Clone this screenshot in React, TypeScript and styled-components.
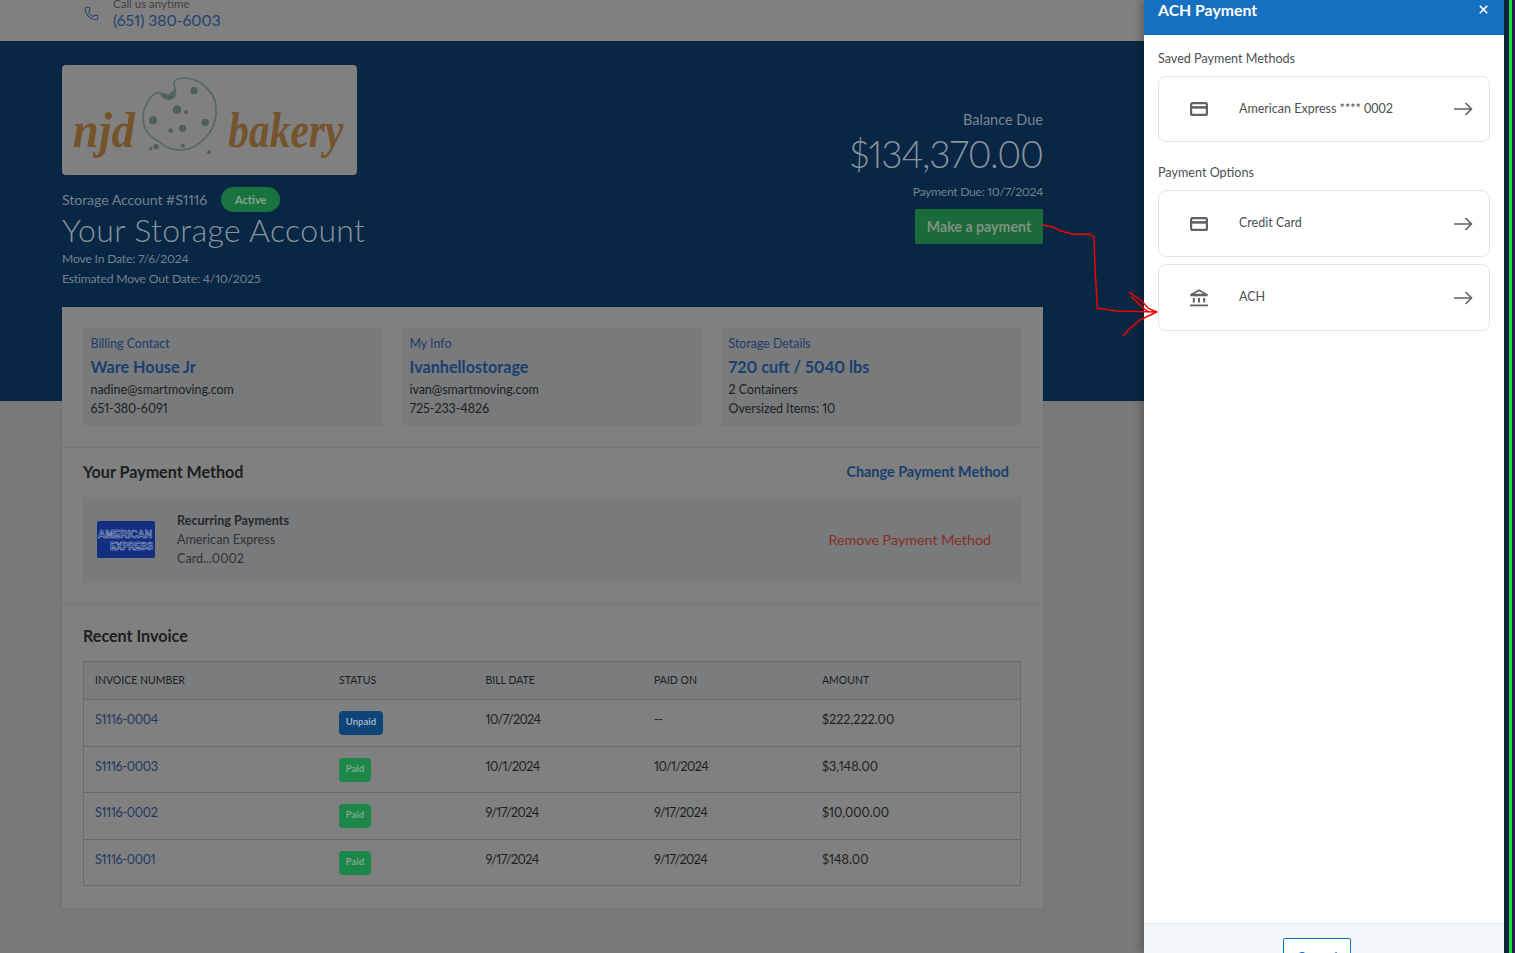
import React from 'react';
import styled, { createGlobalStyle } from 'styled-components';
import { Phone, X } from 'lucide-react';

const FONT = `Lato, "Open Sans", "Liberation Sans", sans-serif`;

const GlobalStyle = createGlobalStyle`
  html, body {
    margin: 0;
    padding: 0;
    height: 100%;
    overflow: hidden;
    background: #77797b;
    font-family: ${FONT};
    font-variant-numeric: proportional-nums;
    font-feature-settings: "pnum";
  }
  * { box-sizing: border-box; }
`;

const Page = styled.div`
  position: relative;
  width: 1515px;
  height: 953px;
  overflow: hidden;
  background: #77797b;
`;

const TopBar = styled.header`
  height: 41px;
  background: #808080;
  padding: 0 0 12px 84px;
  display: flex;
  align-items: flex-end;
  gap: 14px;
  color: #2b4672;
`;

const PhoneText = styled.div`
  display: flex;
  flex-direction: column;
`;

const PhoneLabel = styled.span`
  font-size: 11.5px;
  line-height: 14px;
  color: #3f4348;
`;

const PhoneNumber = styled.span`
  font-size: 15.6px;
  line-height: 18px;
  color: #26426f;
`;

const Hero = styled.section`
  height: 360px;
  background: #072744;
  padding: 24px 0 0 62px;
`;

const HeroInner = styled.div`
  width: 981px;
  display: flex;
  justify-content: space-between;
`;

const HeroLeft = styled.div`
  display: flex;
  flex-direction: column;
`;

const LogoBox = styled.div`
  width: 295px;
  height: 110px;
  background: #808080;
  border-radius: 4px;
`;

const AccountRow = styled.div`
  display: flex;
  align-items: center;
  gap: 14px;
  margin-top: 12px;
  height: 25px;
  font-size: 14.2px;
  letter-spacing: -0.1px;
  color: #74818e;
`;

const ActivePill = styled.span`
  width: 59px;
  height: 25px;
  border-radius: 13px;
  background: #19733f;
  color: #86a591;
  font-size: 11px;
  font-weight: 700;
  letter-spacing: 0;
  display: flex;
  align-items: center;
  justify-content: center;
`;

const Title = styled.h1`
  margin: -1px 0 0;
  font-size: 32px;
  line-height: 38px;
  font-weight: 300;
  color: #8a939c;
  letter-spacing: 0.35px;
`;

const Meta = styled.div`
  font-size: 12.2px;
  line-height: 19.5px;
  letter-spacing: -0.2px;
  color: #74818e;
`;

const HeroRight = styled.div`
  display: flex;
  flex-direction: column;
  align-items: flex-end;
  padding-top: 45px;
`;

const BalanceLabel = styled.div`
  font-size: 14.5px;
  line-height: 20px;
  color: #7b8590;
`;

const BalanceAmount = styled.div`
  font-size: 37px;
  line-height: 48px;
  font-weight: 300;
  letter-spacing: -1.1px;
  color: #8a939c;
`;

const PaymentDue = styled.div`
  margin-top: 5px;
  font-size: 12.2px;
  line-height: 18px;
  letter-spacing: -0.3px;
  color: #74818e;
`;

const PayButton = styled.button`
  margin-top: 8px;
  width: 128px;
  height: 35px;
  padding: 0 0 1px;
  border: 0;
  border-radius: 2px;
  background: #1b6b3a;
  color: #80917f;
  font-family: ${FONT};
  font-size: 14.2px;
  font-weight: 700;
`;

const Card = styled.main`
  position: relative;
  margin: -94px 0 0 62px;
  width: 981px;
  height: 601px;
  background: #808080;
  box-shadow: 0 0 4px rgba(0, 0, 0, 0.08);
`;

const InfoRow = styled.div`
  display: grid;
  grid-template-columns: 300px 300px 300px;
  column-gap: 19px;
  padding: 21px 21px;
  border-bottom: 1px solid #757678;
  height: 141px;
`;

const InfoBox = styled.div`
  height: 98px;
  background: #787a7c;
  padding: 6px 7.5px;
`;

const InfoLabel = styled.div`
  font-size: 12.4px;
  line-height: 19px;
  color: #1f3c68;
`;

const InfoName = styled.div`
  font-size: 16.2px;
  line-height: 27px;
  font-weight: 700;
  color: #1a3f6e;
`;

const InfoLine = styled.div`
  font-size: 12.5px;
  line-height: 19px;
  letter-spacing: -0.05px;
  color: #1c1f22;
`;

const Section = styled.section`
  padding: 11px 22px 21px 21px;
  border-bottom: 1px solid #757678;
`;

const SectionHead = styled.div`
  display: flex;
  justify-content: space-between;
  align-items: center;
  height: 25px;
  margin-bottom: 13px;
  padding-right: 12px;
`;

const SectionTitle = styled.h2`
  margin: 0;
  font-size: 16.1px;
  font-weight: 700;
  color: #1c1f22;
`;

const ChangeLink = styled.a`
  font-size: 14.4px;
  font-weight: 700;
  color: #1a3f6e;
`;

const MethodBox = styled.div`
  height: 86px;
  background: #787a7c;
  display: flex;
  align-items: center;
  padding: 0 30px 2px 14px;
`;

const MethodText = styled.div`
  margin-left: 22px;
  flex: 1;
  font-size: 12.6px;
  line-height: 19px;
  color: #2f3236;
`;

const MethodStrong = styled.div`
  font-weight: 700;
  color: #26292c;
`;

const RemoveLink = styled.a`
  font-size: 14.3px;
  color: #8a2f25;
`;

const InvoiceSection = styled.section`
  padding: 20px 22px 0 21px;
`;

const InvoiceTitle = styled(SectionTitle)`
  line-height: 22px;
  margin-bottom: 14px;
`;

const Table = styled.div`
  border: 1px solid #696b6d;
`;

const Row = styled.div<{ $h: number; $head?: boolean }>`
  display: grid;
  grid-template-columns: 244px 146.5px 168.5px 168px 1fr;
  padding: ${p => (p.$head ? '10px' : '11px')} 0 0 11px;
  height: ${p => p.$h}px;
  background: ${p => (p.$head ? '#7a7c7e' : 'transparent')};
  border-bottom: 1px solid #696b6d;
  font-size: ${p => (p.$head ? '10.5px' : '12.6px')};
  line-height: ${p => (p.$head ? '16px' : '17px')};
  color: #1c1f22;
  &:last-child { border-bottom: 0; }
`;

const InvoiceLink = styled.a`
  letter-spacing: -0.3px;
  color: #1f3860;
`;

const DateText = styled.span`
  letter-spacing: -0.6px;
`;

const StatusBadge = styled.span<{ $unpaid?: boolean }>`
  display: flex;
  align-items: center;
  justify-content: center;
  width: ${p => (p.$unpaid ? 44 : 32)}px;
  height: 24px;
  padding-bottom: 3px;
  border-radius: 4px;
  background: ${p => (p.$unpaid ? '#0f4478' : '#1d8749')};
  color: ${p => (p.$unpaid ? '#9fb0c2' : '#7fa890')};
  font-size: 9.5px;
  font-weight: 700;
`;

const Drawer = styled.aside`
  position: absolute;
  top: 0;
  left: 1144px;
  width: 360px;
  height: 953px;
  background: #fff;
  display: flex;
  flex-direction: column;
  box-shadow: -3px 0 8px rgba(0, 0, 0, 0.25);
`;

const DrawerHead = styled.div`
  height: 35px;
  flex: none;
  background: #1570c1;
  color: #fff;
  padding: 0 14px 16px;
  display: flex;
  align-items: center;
  justify-content: space-between;
  font-size: 15.8px;
  font-weight: 700;
`;

const DrawerBody = styled.div`
  flex: 1;
  padding: 14px 14px 0;
`;

const GroupLabel = styled.div<{ $gap?: number }>`
  margin-top: ${p => p.$gap ?? 0}px;
  height: 27px;
  font-size: 12.6px;
  line-height: 20px;
  color: #4d4f53;
`;

const OptionRow = styled.button<{ $h: number }>`
  width: 332px;
  height: ${p => p.$h}px;
  margin-bottom: 7px;
  background: #fff;
  border: 1px solid #e4e5e7;
  border-radius: 8px;
  padding: 0 16px 0 31px;
  display: flex;
  align-items: center;
  font-family: ${FONT};
  font-size: 12.5px;
  color: #4d4f53;
`;

const OptionText = styled.span`
  flex: 1;
  margin-left: 31px;
  padding-bottom: 2px;
  text-align: left;
`;

const DrawerFoot = styled.div`
  height: 30px;
  flex: none;
  background: #f3f6fa;
  border-top: 1px solid #e6e9ec;
  padding: 14px 14px 0 0;
  display: flex;
  justify-content: center;
  overflow: hidden;
`;

const CancelButton = styled.button`
  width: 68px;
  height: 36px;
  flex: none;
  background: #fff;
  border: 1px solid #1570c1;
  border-radius: 2px;
  color: #1570c1;
  font-family: ${FONT};
  font-size: 14px;
`;

const Stripes = styled.div`
  position: absolute;
  top: 0;
  right: 0;
  width: 11px;
  height: 953px;
  display: grid;
  grid-template-columns: 5px 3px 3px;
`;

const Stripe = styled.div<{ $c: string }>`
  background: ${p => p.$c};
`;

const Annotation = styled.svg`
  position: absolute;
  top: 0;
  left: 1040px;
  pointer-events: none;
`;

const CardIcon = () => (
  <svg width="18" height="14" viewBox="0 0 18 14" fill="none" stroke="#5f6266" strokeWidth="2.2">
    <rect x="1.1" y="1.1" width="15.8" height="11.8" rx="1.5" />
    <path d="M1 5.4h16" strokeWidth="2.6" />
  </svg>
);

const BankIcon = () => (
  <svg width="18" height="18" viewBox="0 0 18 18" fill="none" stroke="#5f6266">
    <path d="M1.5 5.5 9 1.2 16.5 5.5Z" fill="#fff" strokeWidth="1.6" />
    <path d="M0.5 6.4h17" strokeWidth="1.8" />
    <path d="M3.8 9v4.6M9 9v4.6M14.2 9v4.6" strokeWidth="2" />
    <path d="M0 16.4h18" strokeWidth="1.8" />
  </svg>
);

const ArrowIcon = () => (
  <svg width="19" height="14" viewBox="0 0 19 14" fill="none" stroke="#5f6266" strokeWidth="1.6">
    <path d="M0 7h17.5M11.5 1l6 6-6 6" />
  </svg>
);

const AmexLogo = () => (
  <svg width="58" height="37" viewBox="0 0 58 37">
    <rect width="58" height="37" rx="2" fill="#12307f" />
    <text x="1" y="17" fontFamily="Liberation Sans" fontSize="10.5" fontWeight="700" fill="#12307f" stroke="#a9b4cf" strokeWidth="0.55" textLength="54" lengthAdjust="spacingAndGlyphs">AMERICAN</text>
    <text x="13" y="28.5" fontFamily="Liberation Sans" fontSize="10.5" fontWeight="700" fill="#12307f" stroke="#a9b4cf" strokeWidth="0.55" textLength="43" lengthAdjust="spacingAndGlyphs">EXPRESS</text>
  </svg>
);

const BakeryLogo = () => (
  <svg width="295" height="110" viewBox="6 15 885 330">
    <g fill="#4f5f5c">
      <path d="M298 98C318 108 338 102 345 82 352 98 350 116 330 120 314 120 304 112 298 98Z" />
      <circle cx="402" cy="92" r="11" />
      <circle cx="351" cy="149" r="13" />
      <circle cx="378" cy="157" r="6" />
      <circle cx="279" cy="181" r="12" />
      <circle cx="436" cy="187" r="11" />
      <circle cx="368" cy="205" r="11" />
      <circle cx="332" cy="212" r="7" />
      <circle cx="369" cy="257" r="6" />
      <circle cx="288" cy="260" r="8" />
      <circle cx="272" cy="266" r="5" />
      <circle cx="447" cy="277" r="6" />
    </g>
    <path
      d="M345 62C360 50 400 50 430 75 455 95 470 120 468 150 470 190 450 230 410 255 380 275 340 275 310 255 285 235 255 225 250 185 245 150 265 110 290 98 310 95 330 115 345 100 352 85 335 75 345 62Z"
      fill="none"
      stroke="#56686a"
      strokeWidth="5"
    />
    <g fontFamily="Liberation Serif" fontWeight="700" fontStyle="italic" fill="#74542c" fontSize="150">
      <text x="38" y="262" textLength="187" lengthAdjust="spacingAndGlyphs">njd</text>
      <text x="505" y="262" textLength="345" lengthAdjust="spacingAndGlyphs">bakery</text>
    </g>
  </svg>
);

const info = [
  { label: 'Billing Contact', name: 'Ware House Jr', lines: ['nadine@smartmoving.com', '651-380-6091'] },
  { label: 'My Info', name: 'Ivanhellostorage', lines: ['ivan@smartmoving.com', '725-233-4826'] },
  { label: 'Storage Details', name: '720 cuft / 5040 lbs', lines: ['2 Containers', 'Oversized Items: 10'] },
];

const invoices = [
  { id: 'S1116-0004', status: 'Unpaid', bill: '10/7/2024', paid: '--', amount: '$222,222.00', h: 47 },
  { id: 'S1116-0003', status: 'Paid', bill: '10/1/2024', paid: '10/1/2024', amount: '$3,148.00', h: 46 },
  { id: 'S1116-0002', status: 'Paid', bill: '9/17/2024', paid: '9/17/2024', amount: '$10,000.00', h: 47 },
  { id: 'S1116-0001', status: 'Paid', bill: '9/17/2024', paid: '9/17/2024', amount: '$148.00', h: 45 },
];

const App: React.FC = () => (
  <Page>
    <GlobalStyle />
    <TopBar>
      <Phone size={15} strokeWidth={1.7} style={{ marginBottom: 8 }} />
      <PhoneText>
        <PhoneLabel>Call us anytime</PhoneLabel>
        <PhoneNumber>(651) 380-6003</PhoneNumber>
      </PhoneText>
    </TopBar>

    <Hero>
      <HeroInner>
        <HeroLeft>
          <LogoBox>
            <BakeryLogo />
          </LogoBox>
          <AccountRow>
            Storage Account #S1116
            <ActivePill>Active</ActivePill>
          </AccountRow>
          <Title>Your Storage Account</Title>
          <Meta>Move In Date: 7/6/2024</Meta>
          <Meta>Estimated Move Out Date: 4/10/2025</Meta>
        </HeroLeft>
        <HeroRight>
          <BalanceLabel>Balance Due</BalanceLabel>
          <BalanceAmount>$134,370.00</BalanceAmount>
          <PaymentDue>Payment Due: 10/7/2024</PaymentDue>
          <PayButton>Make a payment</PayButton>
        </HeroRight>
      </HeroInner>
    </Hero>

    <Card>
      <InfoRow>
        {info.map(box => (
          <InfoBox key={box.label}>
            <InfoLabel>{box.label}</InfoLabel>
            <InfoName>{box.name}</InfoName>
            {box.lines.map(line => (
              <InfoLine key={line}>{line}</InfoLine>
            ))}
          </InfoBox>
        ))}
      </InfoRow>

      <Section>
        <SectionHead>
          <SectionTitle>Your Payment Method</SectionTitle>
          <ChangeLink>Change Payment Method</ChangeLink>
        </SectionHead>
        <MethodBox>
          <AmexLogo />
          <MethodText>
            <MethodStrong>Recurring Payments</MethodStrong>
            <div>American Express</div>
            <div>Card...0002</div>
          </MethodText>
          <RemoveLink>Remove Payment Method</RemoveLink>
        </MethodBox>
      </Section>

      <InvoiceSection>
        <InvoiceTitle>Recent Invoice</InvoiceTitle>
        <Table>
          <Row $h={38} $head>
            <span>INVOICE NUMBER</span>
            <span>STATUS</span>
            <span>BILL DATE</span>
            <span>PAID ON</span>
            <span>AMOUNT</span>
          </Row>
          {invoices.map(inv => (
            <Row key={inv.id} $h={inv.h}>
              <InvoiceLink>{inv.id}</InvoiceLink>
              <StatusBadge $unpaid={inv.status === 'Unpaid'}>{inv.status}</StatusBadge>
              <DateText>{inv.bill}</DateText>
              <DateText>{inv.paid}</DateText>
              <span>{inv.amount}</span>
            </Row>
          ))}
        </Table>
      </InvoiceSection>
    </Card>

    <Drawer>
      <DrawerHead>
        ACH Payment
        <X size={13} strokeWidth={3.2} />
      </DrawerHead>
      <DrawerBody>
        <GroupLabel>Saved Payment Methods</GroupLabel>
        <OptionRow $h={66}>
          <CardIcon />
          <OptionText>American Express **** 0002</OptionText>
          <ArrowIcon />
        </OptionRow>
        <GroupLabel $gap={21}>Payment Options</GroupLabel>
        <OptionRow $h={67}>
          <CardIcon />
          <OptionText>Credit Card</OptionText>
          <ArrowIcon />
        </OptionRow>
        <OptionRow $h={67}>
          <BankIcon />
          <OptionText>ACH</OptionText>
          <ArrowIcon />
        </OptionRow>
      </DrawerBody>
      <DrawerFoot>
        <CancelButton>Cancel</CancelButton>
      </DrawerFoot>
    </Drawer>

    <Stripes>
      <Stripe $c="#0f2038" />
      <Stripe $c="#10e040" />
      <Stripe $c="#2b1a4a" />
    </Stripes>

    <Annotation width="475" height="345" viewBox="0 0 1425 1035" fill="none" stroke="#f00000" strokeWidth="4.5" strokeLinejoin="round" strokeLinecap="round">
      <path d="M9 675 40 681 60 692 100 703 150 703 162 710 165 800 172 925 230 933 350 936" />
      <path d="M268 878 300 898 325 925 350 936 300 960 270 985 250 1008" />
      <path d="M275 890 310 925 325 935" />
    </Annotation>
  </Page>
);

export default App;
